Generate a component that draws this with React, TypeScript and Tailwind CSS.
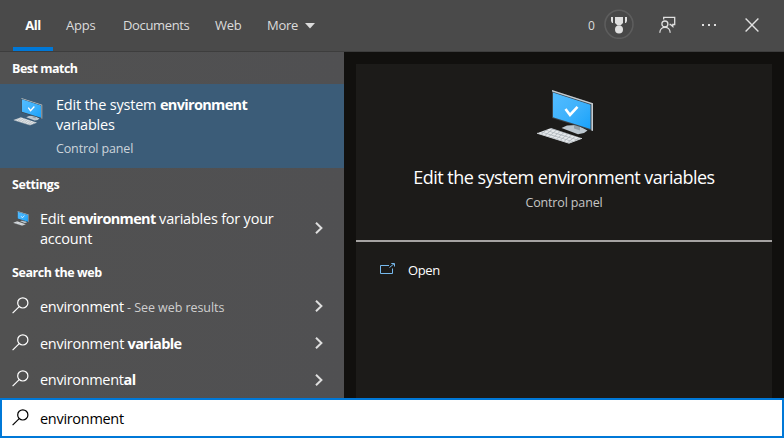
import React from "react";

function ComputerIcon({ className }: { className: string }) {
  return (
    <svg viewBox="0 0 58 55" className={className}>
      <defs>
        <linearGradient id="screen" x1="0" y1="0" x2="1" y2="1">
          <stop offset="0" stopColor="#52bcff" />
          <stop offset="0.5" stopColor="#3fb2fc" />
          <stop offset="1" stopColor="#18a2fb" />
        </linearGradient>
        <pattern id="keys" width="4" height="3" patternUnits="userSpaceOnUse" patternTransform="rotate(17) skewX(-32)">
          <rect width="4" height="3" fill="#b4bbc0" />
          <rect width="3.1" height="2.2" fill="#e6e9eb" />
        </pattern>
      </defs>
      <path d="M25.5 38 31 35.6 41 35 51.5 40.5 48 43 42 44.2Z" fill="#bcc7cf" />
      <path d="M38 34 44 36V40.5L38 38.5Z" fill="#93a0a8" />
      <path d="M16 0 57 13.2V41L16 28Z" fill="#3b4349" />
      <path d="M16 0 57 13.2V41L55.4 40.5V14.3L16 1.6Z" fill="#c3cbd0" />
      <path d="M17 2.6 54.5 14.8V39L17 27.2Z" fill="url(#screen)" />
      <path d="M29.5 19 34 25 41.5 16.8" fill="none" stroke="#fff" strokeWidth="2.6" />
      <path d="M1 43.2 15 38 46 48.3 33 53.2Z" fill="url(#keys)" />
      <path d="M1 43.2 33 53.2 46 48.3" fill="none" stroke="#c8cdd1" strokeWidth="1" />
    </svg>
  );
}

function SearchIcon({ className = "" }: { className?: string }) {
  return (
    <svg viewBox="0 0 17 17" className={`h-[17px] w-[17px] ${className}`} fill="none" stroke="currentColor" strokeWidth="1.2">
      <circle cx="10.8" cy="5.9" r="5.1" />
      <path d="M7.2 9.6 0.6 16.2" />
    </svg>
  );
}

function Chevron() {
  return (
    <svg viewBox="0 0 8 12" className="mb-px ml-auto mr-[21px] h-3 w-2 shrink-0" fill="none" stroke="#dedede" strokeWidth="2">
      <path d="M1 0.8 6.4 6 1 11.2" />
    </svg>
  );
}

function WebRow({ children, className }: { children: React.ReactNode; className: string }) {
  return (
    <div className={`flex items-center pl-3 text-[14.5px] ${className}`}>
      <SearchIcon className="mb-[3px] mr-[11px]" />
      <div className="flex items-baseline whitespace-pre">{children}</div>
      <Chevron />
    </div>
  );
}

export default function App() {
  return (
    <div className="flex h-[438px] w-[784px] flex-col overflow-hidden bg-[#525254] font-['Open_Sans','Noto_Sans',sans-serif] text-white">
      <header className="flex h-[52px] shrink-0 border-b border-[#3d3d3d] bg-[#4a4a4a] text-[13px] leading-[51px] text-[#dcdcdc]">
        <div className="ml-[13px] h-[51px] w-10 border-b-4 border-[#0078d7] text-center font-bold tracking-[-0.4px] text-white">All</div>
        <div className="ml-[13px] w-[57px] tracking-[-0.2px]">Apps</div>
        <div className="w-[92px] tracking-[-0.35px]">Documents</div>
        <div className="w-[52px] tracking-[-0.3px]">Web</div>
        <div className="w-[38px] tracking-[-0.3px]">More</div>
        <svg viewBox="0 0 10 6" className="mt-[23px] h-[6px] w-[10px]" fill="#dcdcdc"><path d="M0 0H10L5 5.5Z" /></svg>
        <div className="ml-auto w-4 text-[12px]">0</div>
        <svg viewBox="0 0 30 30" className="mt-[9px] h-[30px] w-[30px]">
          <circle cx="15" cy="15.3" r="14" fill="#484848" stroke="#5d5d5d" strokeWidth="1.6" />
          <path d="M11 8h8v6l-2.5 2.5h-3L11 14Z" fill="#e0e0e0" />
          <circle cx="15" cy="20.5" r="4" fill="#e0e0e0" />
          <path d="M7 8h2v6H8L7 12ZM21 8h2v4l-1 2h-1Z" fill="#e0e0e0" />
        </svg>
        <svg viewBox="0 0 17 17" className="ml-[25px] mt-4 h-[17px] w-[17px]" fill="none" stroke="#e0e0e0" strokeWidth="1.3">
          <path d="M4.7 3.6V1.4H15.7V8.5H13.8V10.5L11.5 8.5H10.5" />
          <circle cx="5.9" cy="8" r="3" />
          <path d="M.8 16.8C.8 9.4 11.2 9.4 11.2 16.8" />
        </svg>
        <svg viewBox="0 0 15 2" className="ml-[26px] mt-6 h-[2px] w-[15px]" fill="#e0e0e0"><path d="M0 0h2v2H0ZM6 0h2v2H6ZM12 0h2v2H12Z" /></svg>
        <svg viewBox="0 0 14 14" className="ml-7 mr-[25px] mt-[18px] h-[14px] w-[14px]" stroke="#e0e0e0" strokeWidth="1.4"><path d="M.6.6 13.4 13.4M13.4.6.6 13.4" /></svg>
      </header>

      <div className="flex h-[346px] shrink-0">
        <main className="flex w-[344px] flex-col bg-linear-to-r from-[#515151] to-[#505052]">
          <h2 className="h-8 pl-3 text-[12.5px] font-bold leading-[33px] tracking-[-0.5px]">Best match</h2>
          <section className="flex h-[84px] bg-[#3b5c78] pl-[13px]">
            <ComputerIcon className="mt-[14px] h-[28px] w-[30px]" />
            <div className="ml-[13px] pt-[11px]">
              <p className="whitespace-nowrap text-[14.5px] leading-5 tracking-[-0.2px]">Edit the system <b className="tracking-[-0.67px]">environment</b><br />variables</p>
              <p className="mt-1 text-[12.5px] leading-5 tracking-[-0.14px] text-[#ccd4db]">Control panel</p>
            </div>
          </section>
          <h2 className="h-[33px] pl-3 text-[12.5px] font-bold leading-[34px] tracking-[-0.4px]">Settings</h2>
          <section className="flex h-[56px] items-start pl-[13px]">
            <ComputerIcon className="mt-[10px] h-[15px] w-[16px]" />
            <p className="ml-[11px] mt-2 whitespace-nowrap text-[14.5px] leading-5 tracking-[-0.22px]">Edit <b className="tracking-[-0.67px]">environment</b> variables for your<br />account</p>
            <div className="ml-auto mt-[21px]"><Chevron /></div>
          </section>
          <h2 className="h-[31px] pl-3 text-[12.5px] font-bold leading-[31px] tracking-[-0.42px]">Search the web</h2>
          <WebRow className="h-[37px]">
            <span className="tracking-[-0.3px]">environment</span>
            <span className="text-[12.5px] tracking-[-0.06px] text-[#cfcfcf]"> - See web results</span>
          </WebRow>
          <WebRow className="h-[37px]">
            <span className="tracking-[-0.28px]">environment </span><b className="tracking-[-0.62px]">variable</b>
          </WebRow>
          <WebRow className="h-[36px]">
            <span className="tracking-[-0.32px]">environment</span><b className="tracking-[-0.5px]">al</b>
          </WebRow>
        </main>

        <aside className="flex w-[440px] flex-col bg-[#11100e] px-3 pt-3">
          <div className="flex flex-1 flex-col bg-[#1c1b19]">
            <div className="flex h-[178px] flex-col items-center border-b-2 border-[#a5a3a2]">
              <ComputerIcon className="ml-[2px] mt-[26px] h-[55px] w-[58px]" />
              <h1 className="mt-[20px] whitespace-nowrap text-[18px] leading-6 tracking-[-0.53px]">Edit the system environment variables</h1>
              <p className="mt-1 text-[12.5px] leading-5 tracking-[-0.14px] text-[#c6c6c5]">Control panel</p>
            </div>
            <div className="flex h-[56px] items-center pl-6">
              <svg viewBox="0 0 16 12" className="mb-[3px] h-3 w-4" fill="none" stroke="#76b9ed">
                <path d="M9 2.5H.5v8h12V5.5M9.5 4.5 14 .8M11.3.5H14.5V3.5" />
              </svg>
              <span className="ml-3 mt-[2px] text-[13px] tracking-[-0.4px]">Open</span>
            </div>
          </div>
        </aside>
      </div>

      <div className="flex h-10 shrink-0 items-center border-2 border-[#0078d7] bg-white pl-[10px] text-black">
        <SearchIcon className="mb-px mr-[11px]" />
        <span className="mt-[2px] text-[14.5px] tracking-[-0.3px]">environment</span>
      </div>
    </div>
  );
}
